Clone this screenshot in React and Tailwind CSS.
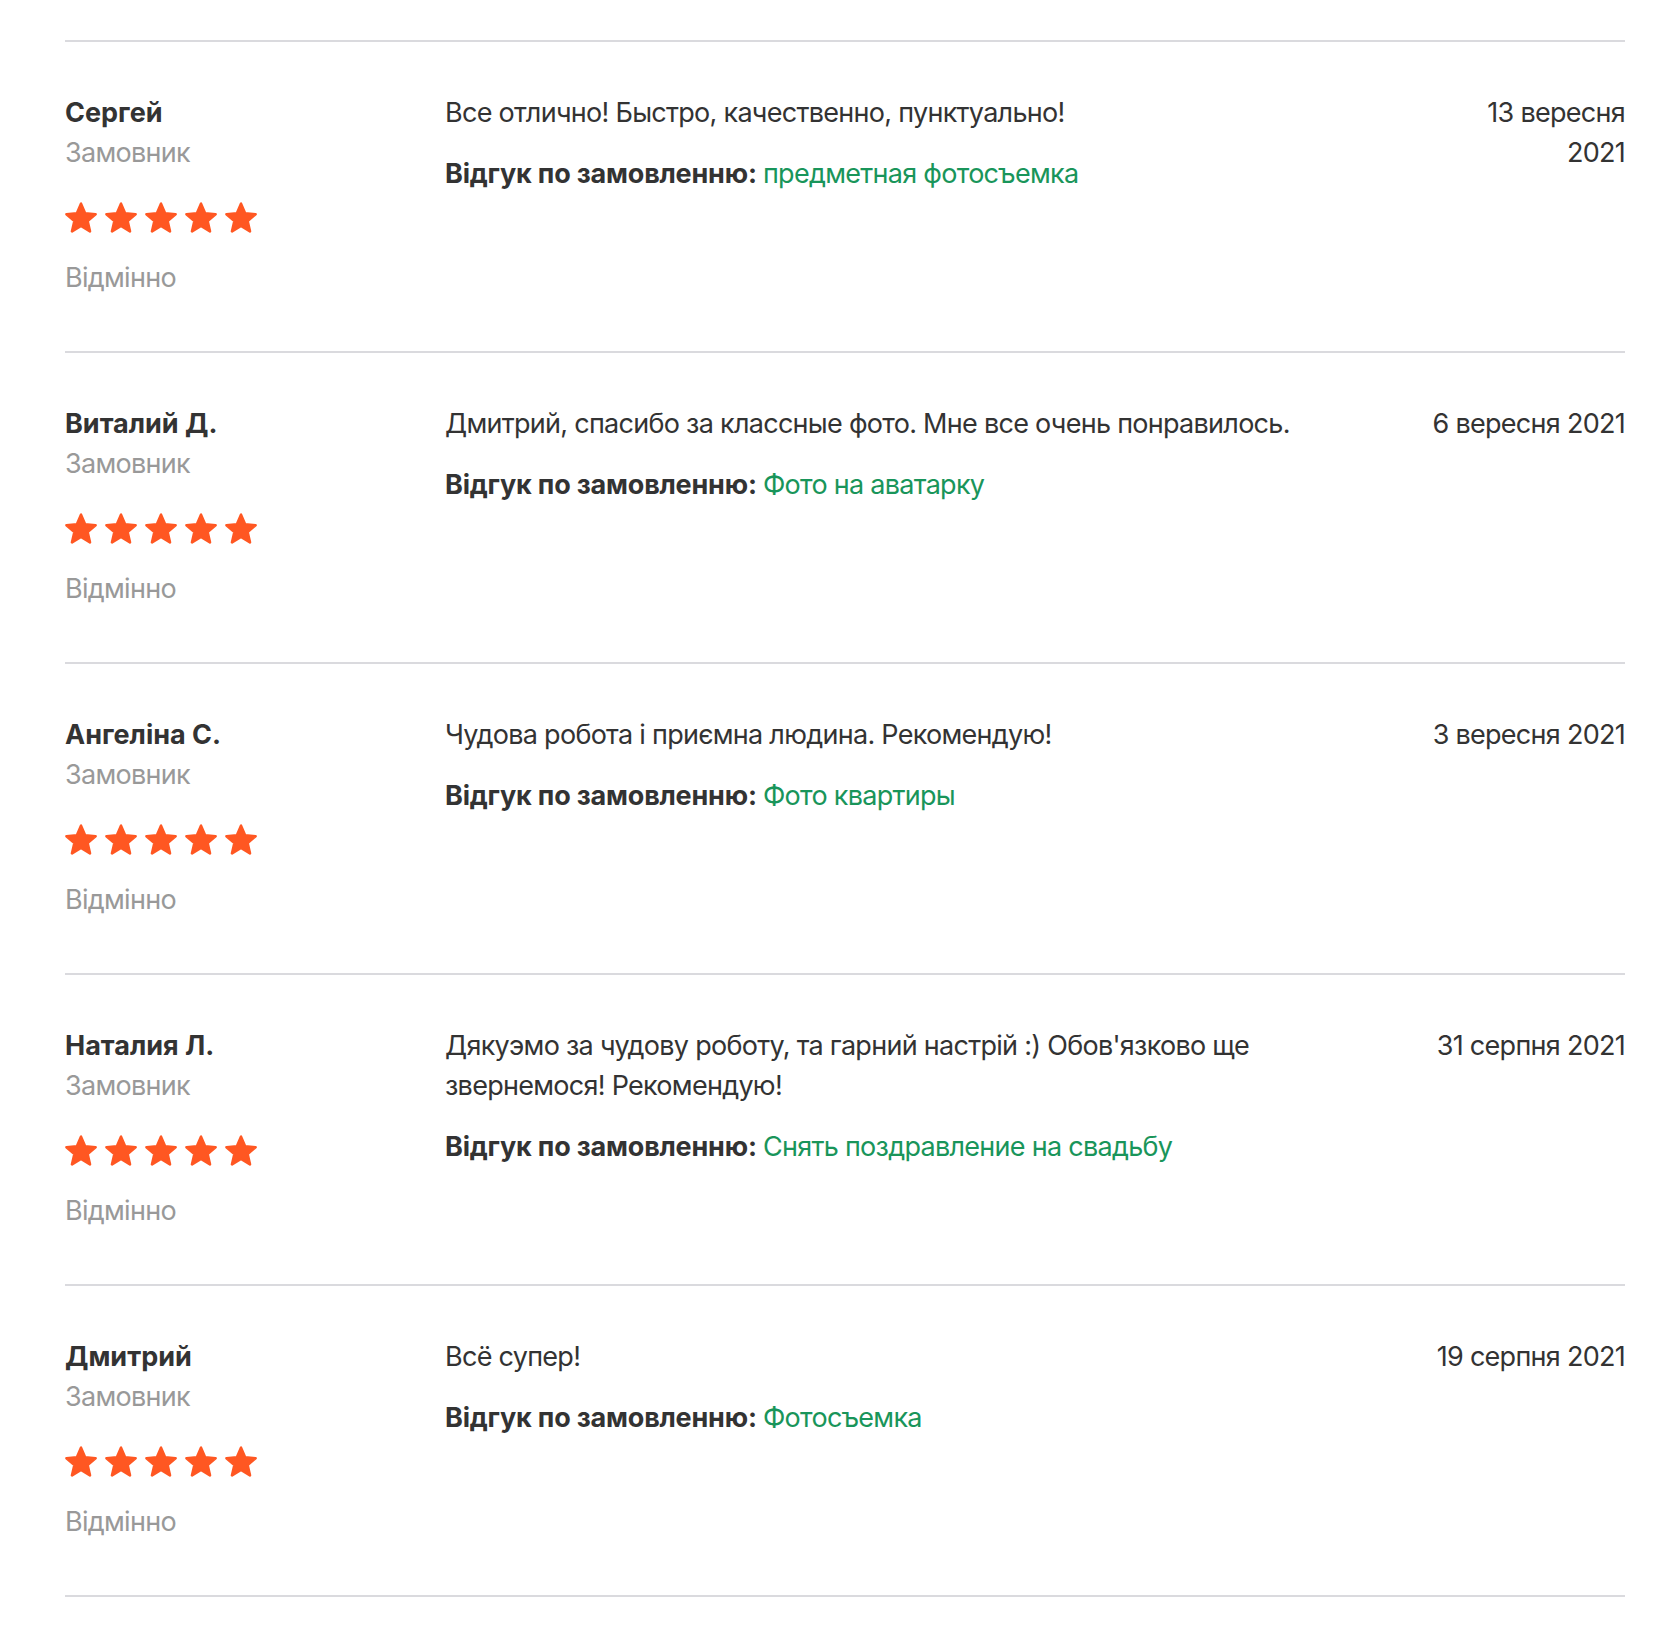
import React from "react";

const reviews = [
  {
    name: "Сергей",
    text: "Все отлично! Быстро, качественно, пунктуально!",
    order: "предметная фотосъемка",
    date: "13 вересня 2021",
  },
  {
    name: "Виталий Д.",
    text: "Дмитрий, спасибо за классные фото. Мне все очень понравилось.",
    order: "Фото на аватарку",
    date: "6 вересня 2021",
  },
  {
    name: "Ангеліна С.",
    text: "Чудова робота і приємна людина. Рекомендую!",
    order: "Фото квартиры",
    date: "3 вересня 2021",
  },
  {
    name: "Наталия Л.",
    text: "Дякуэмо за чудову роботу, та гарний настрій :) Обов'язково ще звернемося! Рекомендую!",
    order: "Снять поздравление на свадьбу",
    date: "31 серпня 2021",
  },
  {
    name: "Дмитрий",
    text: "Всё супер!",
    order: "Фотосъемка",
    date: "19 серпня 2021",
  },
];

function Star() {
  return (
    <svg width="32" height="31" viewBox="1 1 22 21" className="block">
      <path
        d="M12 17.27L18.18 21l-1.64-7.03L22 9.24l-7.19-.61L12 2 9.19 8.63 2 9.24l5.46 4.73L5.82 21z"
        fill="#ff5722"
        stroke="#ff5722"
        strokeWidth="1.8"
        strokeLinejoin="round"
      />
    </svg>
  );
}

export default function App() {
  return (
    <div
      className="min-h-[1640px] bg-white pl-[65px] pt-[40px]"
      style={{ fontFamily: "Inter, 'Noto Sans', sans-serif" }}
    >
      <div className="w-[1560px] border-t-2 border-[#dadade]">
        {reviews.map((r, i) => (
          <div
            key={i}
            className="flex border-b-2 border-[#dadade] pt-[51px] pb-[53px] text-[27px] leading-[40px] tracking-[-0.72px] text-[#333333]"
          >
            <div className="w-[380px] shrink-0">
              <div className="font-bold tracking-normal">{r.name}</div>
              <div className="text-[#999999]">Замовник</div>
              <div className="mt-[29px] flex gap-2">
                <Star />
                <Star />
                <Star />
                <Star />
                <Star />
              </div>
              <div className="mt-[25px] text-[#999999]">Відмінно</div>
            </div>
            <div className="flex-1 pr-[60px]">
              <p>{r.text}</p>
              <p className="mt-[21px]">
                <span className="font-bold tracking-[-0.2px]">Відгук по замовленню: </span>
                <span className="text-[#19955a]">{r.order}</span>
              </p>
            </div>
            <div className="w-[198px] shrink-0 text-right">{r.date}</div>
          </div>
        ))}
      </div>
    </div>
  );
}
